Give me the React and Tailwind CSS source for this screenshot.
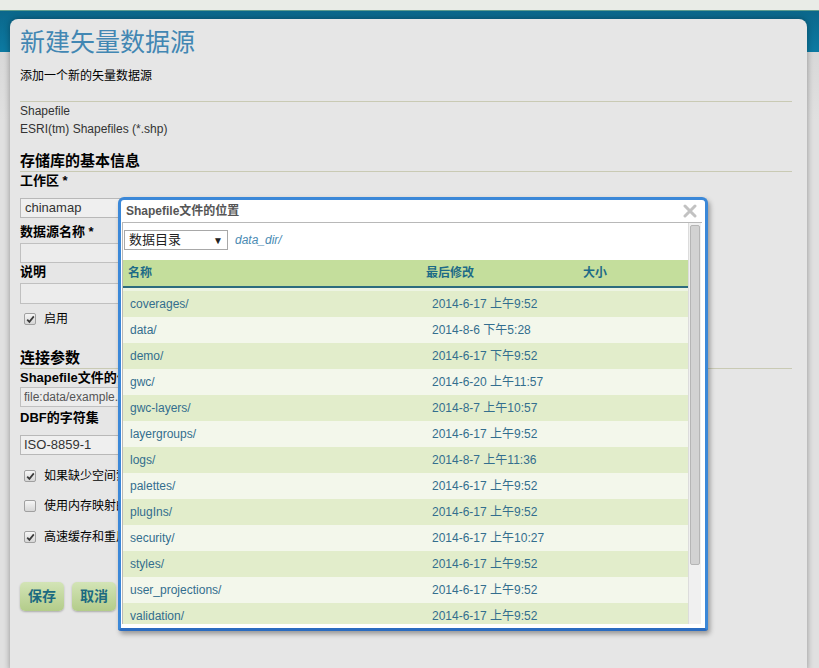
const rows = [
  ['coverages/', '2014-6-17 上午9:52'],
  ['data/', '2014-8-6 下午5:28'],
  ['demo/', '2014-6-17 下午9:52'],
  ['gwc/', '2014-6-20 上午11:57'],
  ['gwc-layers/', '2014-8-7 上午10:57'],
  ['layergroups/', '2014-6-17 上午9:52'],
  ['logs/', '2014-8-7 上午11:36'],
  ['palettes/', '2014-6-17 上午9:52'],
  ['plugIns/', '2014-6-17 上午9:52'],
  ['security/', '2014-6-17 上午10:27'],
  ['styles/', '2014-6-17 上午9:52'],
  ['user_projections/', '2014-6-17 上午9:52'],
  ['validation/', '2014-6-17 上午9:52'],
]

function Check({ checked }) {
  return (
    <span className="shrink-0 w-[12px] h-[12px] border border-[#a0a0a0] rounded-[2px] bg-gradient-to-b from-[#f6f6f6] to-[#d6d6d6] flex items-center justify-center">
      {checked && (
        <svg width="9" height="9" viewBox="0 0 9 9">
          <path d="M1.2 4.6 L3.4 6.9 L7.8 1.4" stroke="#3a3a3a" strokeWidth="1.7" fill="none" />
        </svg>
      )}
    </span>
  )
}

// labels that run under the dialog are clipped at its left edge (x=118)
function CheckRow({ checked, label, className }) {
  return (
    <div className={'flex items-center h-[14px] pl-[4px] gap-[8px] text-[12px] ' + className}>
      <Check checked={checked} />
      <span className="w-[74px] overflow-hidden whitespace-nowrap">{label}</span>
    </div>
  )
}

function Dialog() {
  return (
    <div className="absolute left-[118px] top-[197px] w-[590px] h-[434px] bg-white border-[3px] border-[#3b88d8] border-b-[#2a6cc0] rounded-t-[6px] rounded-b-[3px] shadow-[2px_3px_5px_rgba(0,0,0,0.35)] flex flex-col">
      <div className="h-[22px] flex items-center justify-between pl-[5px] pr-[8px]">
        <span className="text-[12px] font-bold text-[#555]">Shapefile文件的位置</span>
        <svg width="14" height="14" viewBox="0 0 14 14">
          <path d="M2 2 L12 12 M12 2 L2 12" stroke="#c2c2c2" strokeWidth="3" strokeLinecap="round" />
        </svg>
      </div>
      <div className="ml-[1px] w-[580px] h-[402px] border-l border-t border-[#b8b8b8] flex overflow-hidden">
        <div className="w-[565px] overflow-hidden">
          <div className="pt-[7px] flex items-center">
            <div className="ml-[1px] w-[104px] h-[20px] border border-[#a8a8a8] flex items-center justify-between px-[4px] text-[13px] text-[#222]">
              <span>数据目录</span>
              <span className="text-[10px]">▼</span>
            </div>
            <span className="ml-[7px] italic text-[12px] text-[#4a8ab2]">data_dir/</span>
          </div>
          <div className="mt-[10px] h-[28px] bg-[#c4de9c] border-b-2 border-[#2c6c7e] flex items-center text-[12px] font-bold text-[#1d6b87]">
            <span className="w-[303px] pl-[5px]">名称</span>
            <span className="w-[157px]">最后修改</span>
            <span>大小</span>
          </div>
          <div className="h-[3px] bg-[#edf4e3]" />
          {rows.map((r, i) => (
            <div
              key={r[0]}
              className={
                'h-[26px] flex items-center text-[12px] text-[#336e8e] ' +
                (i % 2 === 0 ? 'bg-[#e2edcb]' : 'bg-[#f3f7eb]')
              }
            >
              <span className="w-[309px] pl-[7px]">{r[0]}</span>
              <span>{r[1]}</span>
            </div>
          ))}
        </div>
        <div className="w-[13px] bg-[#f0f0f0] border-l border-[#dcdcdc] pt-[2px] px-[1px]">
          <div className="h-[340px] bg-[#d2d2d2] border border-[#b5b5b5] rounded-[2px]" />
        </div>
      </div>
    </div>
  )
}

function App() {
  return (
    <div className="relative min-h-[668px] overflow-hidden font-['Liberation_Sans','Noto_Sans_CJK_SC',sans-serif] bg-[linear-gradient(to_bottom,#e9ece7_0,#e9ece7_10px,#5e9c8e_10px,#5e9c8e_11px,#0b678b_11px,#0c7aa2_52px,#d8d8d8_52px,#e0e0e0_120px)]">
      <div className="pt-[19px] pl-[10px] w-[807px]">
        <div className="rounded-t-[8px] bg-[#e6e6e6] shadow-[0_0_6px_rgba(0,0,0,0.35)] pl-[10px] pr-[15px] pb-[60px] text-black">
          <h1 className="pt-[8px] h-[38px] text-[25px] leading-[30px] text-[#4287b3]">新建矢量数据源</h1>
          <p className="mt-[10px] text-[12px] leading-[18px]">添加一个新的矢量数据源</p>
          <div className="mt-[16px] border-t border-[#c9cab4]" />
          <div className="text-[12px] leading-[18px] text-[#333]">
            <div>Shapefile</div>
            <div>ESRI(tm) Shapefiles (*.shp)</div>
          </div>
          <h2 className="mt-[13px] text-[15px] leading-[20px] font-bold border-b border-[#c9cab4]">存储库的基本信息</h2>
          <div className="text-[13px] leading-[18px] font-bold">工作区 *</div>
          <div className="mt-[8px] w-[300px] h-[20px] border border-[#b8b8b8] bg-[#efefef] flex items-center pl-[4px] text-[13px] text-[#333]">
            <span className="w-[94px] overflow-hidden whitespace-nowrap">chinamap</span>
          </div>
          <div className="mt-[5px] text-[13px] leading-[18px] font-bold">数据源名称 *</div>
          <div className="mt-[2px] w-[300px] h-[20px] border border-[#c0c0c0] bg-[#ececec]" />
          <div className="text-[13px] leading-[18px] font-bold">说明</div>
          <div className="mt-[2px] w-[300px] h-[21px] border border-[#c0c0c0] bg-[#ececec]" />
          <CheckRow checked label="启用" className="mt-[8px]" />
          <h2 className="mt-[22px] text-[15px] leading-[20px] font-bold border-b border-[#c9cab4]">连接参数</h2>
          <div className="w-[98px] overflow-hidden whitespace-nowrap text-[13px] leading-[18px] font-bold">Shapefile文件的位置 *</div>
          <div className="w-[300px] h-[20px] border border-[#c0c0c0] bg-[#ececec] flex items-center pl-[3px] text-[12px] text-[#555]">
            <span className="w-[95px] overflow-hidden whitespace-nowrap">file:data/example.shp</span>
          </div>
          <div className="mt-[2px] text-[13px] leading-[18px] font-bold">DBF的字符集</div>
          <div className="mt-[8px] w-[300px] h-[20px] border border-[#b8b8b8] bg-[#efefef] flex items-center pl-[3px] text-[13px] text-[#333]">ISO-8859-1</div>
          <CheckRow checked label="如果缺少空间索引或者空间索引过时，重新建立" className="mt-[14px]" />
          <CheckRow label="使用内存映射的缓冲区" className="mt-[16px]" />
          <CheckRow checked label="高速缓存和重用内存映射" className="mt-[17px]" />
          <div className="mt-[38px] flex gap-[8px]">
            <button type="button" className="w-[44px] h-[29px] rounded-[5px] bg-gradient-to-b from-[#d3e4b6] to-[#b3cc8a] shadow-[0_1px_2px_rgba(0,0,0,0.25)] text-[14px] font-bold text-[#1c6a80]">保存</button>
            <button type="button" className="w-[44px] h-[29px] rounded-[5px] bg-gradient-to-b from-[#d3e4b6] to-[#b3cc8a] shadow-[0_1px_2px_rgba(0,0,0,0.25)] text-[14px] font-bold text-[#1c6a80]">取消</button>
          </div>
        </div>
      </div>
      <Dialog />
    </div>
  )
}

export default App
